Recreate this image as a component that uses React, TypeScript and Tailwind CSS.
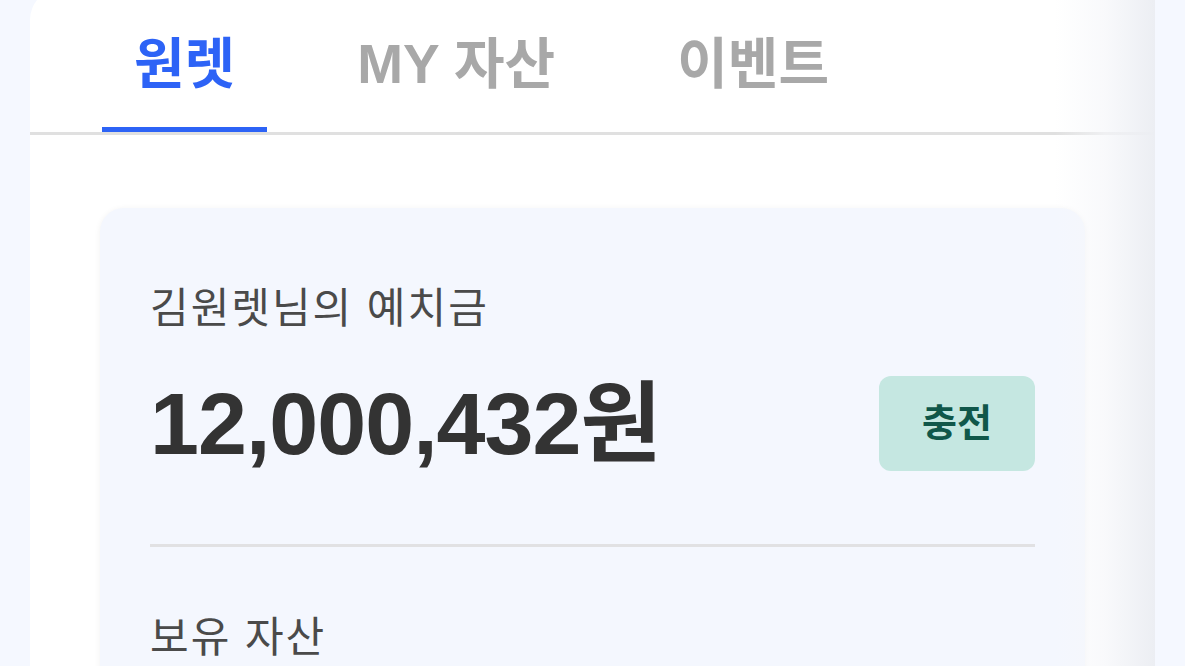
export default function App() {
  const tabs = ['원렛', 'MY 자산', '이벤트'];
  const active = 0;

  return (
    <div
      className="h-[666px] overflow-hidden bg-[#f5f8ff]"
      style={{ fontFamily: '"Liberation Sans", "Noto Sans CJK KR", sans-serif' }}
    >
      <div className="relative mx-[30px] -mt-[12px] h-[700px] rounded-t-[32px] bg-white pt-[12px]">
        {/* 탭 */}
        <div className="flex gap-[58px] border-b-[3px] border-[#e0e0e0] pl-[72px]">
          {tabs.map((t, i) => (
            <div key={t} className="flex flex-col items-center">
              <div
                className={
                  'px-[32px] pt-[32px] pb-[31px] text-[55px] leading-[64px] font-bold ' +
                  (i === active ? 'text-[#2d63f6]' : 'text-[#a8a8a8]')
                }
              >
                {t}
              </div>
              <div className={'h-[5px] w-full ' + (i === active ? 'bg-[#2d63f6]' : 'bg-transparent')} />
            </div>
          ))}
        </div>

        {/* 예치금 카드 */}
        <div className="mx-[70px] mt-[73px] rounded-[24px] bg-[#f4f7fe] px-[50px] pt-[77px] pb-[60px] shadow-[0_1px_6px_rgba(0,0,0,0.06)]">
          <p className="text-[42px] leading-[48px] tracking-[2px] text-[#4a4a4a]">김원렛님의 예치금</p>
          <div className="mt-[43px] flex items-center justify-between">
            <span className="text-[88px] leading-[95px] font-bold tracking-[-1px] text-[#333333]">12,000,432원</span>
            <button className="flex h-[95px] w-[156px] items-center justify-center rounded-[12px] bg-[#c5e7e1] text-[38px] font-bold text-[#10574a]">
              충전
            </button>
          </div>
          <div className="mt-[73px] h-[3px] bg-[#e1e1e3]" />
          <p className="mt-[67px] text-[42px] leading-[48px] tracking-[2px] text-[#4a4a4a]">보유 자산</p>
        </div>

        {/* 오른쪽 스크롤 그림자 */}
        <div className="pointer-events-none absolute top-0 right-0 h-full w-[100px] bg-gradient-to-r from-white/0 via-[#f6f7fa]/70 to-[#eceef3]" />
      </div>
    </div>
  );
}
